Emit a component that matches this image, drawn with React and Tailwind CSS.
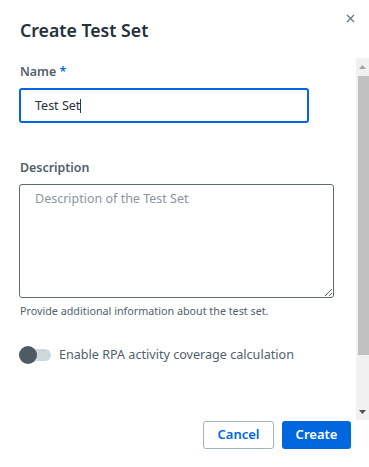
import React from "react";

export default function App() {
  return (
    <div
      className="relative w-[369px] h-[467px] bg-white flex flex-col overflow-hidden"
      style={{ fontFamily: '"Noto Sans", "Open Sans", sans-serif' }}
    >
      <button className="absolute right-[14px] top-[14px] w-[9px] h-[9px] flex items-center justify-center">
        <svg width="9" height="9" viewBox="0 0 9 9">
          <path d="M1 1 L8 8 M8 1 L1 8" stroke="#6b7782" strokeWidth="1.4" fill="none" />
        </svg>
      </button>

      <div className="h-[58px] pl-5 pt-[18px]">
        <h2 className="text-[17.7px] leading-[24px] font-semibold text-[#273139]">Create Test Set</h2>
      </div>

      <div className="h-[362px] flex">
        <div className="flex-1 pl-[19px] pt-[4px] flex flex-col items-start">
          <label className="pl-[1px] text-[12.4px] leading-[20px] font-semibold text-[#526069]">
            Name <span className="text-[#0067df]">*</span>
          </label>
          <div className="mt-[6px] w-[290px] h-[35px] border-2 border-[#0067df] rounded-[3px] pl-[14px] flex items-center">
            <span className="text-[12.5px] text-[#273139] leading-[20px]">Test Set</span>
            <span className="w-[1px] h-[14px] bg-[#1e3a5c]" />
          </div>

          <label className="mt-[35px] pl-[1px] text-[12.4px] leading-[20px] font-semibold text-[#526069]">
            Description
          </label>
          <textarea
            className="mt-[6px] w-[315px] h-[114px] border border-[#5f6b73] rounded-[3px] px-[15px] pt-[4px] text-[12.5px] leading-[20px] text-[#273139] placeholder:text-[#8a959d] outline-none"
            placeholder="Description of the Test Set"
          />
          <p className="mt-[5px] pl-[1px] text-[10.75px] leading-[16px] text-[#526069]">
            Provide additional information about the test set.
          </p>

          <div className="mt-[26px] flex items-center">
            <div className="relative w-[33px] h-[18px] flex items-center">
              <div className="ml-[8px] w-[24px] h-[12px] rounded-full bg-[#cfd8dd]" />
              <div className="absolute left-0 top-0 w-[18px] h-[18px] rounded-full bg-[#4e5b64]" />
            </div>
            <span className="ml-[7px] text-[12.6px] leading-[20px] text-[#526069]">
              Enable RPA activity coverage calculation
            </span>
          </div>
        </div>

        <div className="w-[13px] bg-[#f1f1f1] flex flex-col">
          <div className="h-[18px] flex items-center justify-center">
            <svg width="7" height="4" viewBox="0 0 7 4">
              <path d="M0 4 L3.5 0 L7 4 Z" fill="#a3a3a3" />
            </svg>
          </div>
          <div className="ml-[2px] h-[279px] bg-[#c1c1c1]" />
          <div className="flex-1" />
          <div className="h-[17px] flex items-center justify-center">
            <svg width="7" height="4" viewBox="0 0 7 4">
              <path d="M0 0 L7 0 L3.5 4 Z" fill="#505050" />
            </svg>
          </div>
        </div>
      </div>

      <div className="pt-[1px] pr-[18px] flex justify-end gap-[8px]">
        <button className="w-[71px] h-[28px] border border-[#a4b1b8] rounded-[3px] text-[13px] font-semibold text-[#0067df] flex items-center justify-center">
          Cancel
        </button>
        <button className="w-[69px] h-[28px] rounded-[3px] bg-[#0067df] text-[13px] font-semibold text-white flex items-center justify-center">
          Create
        </button>
      </div>
    </div>
  );
}
